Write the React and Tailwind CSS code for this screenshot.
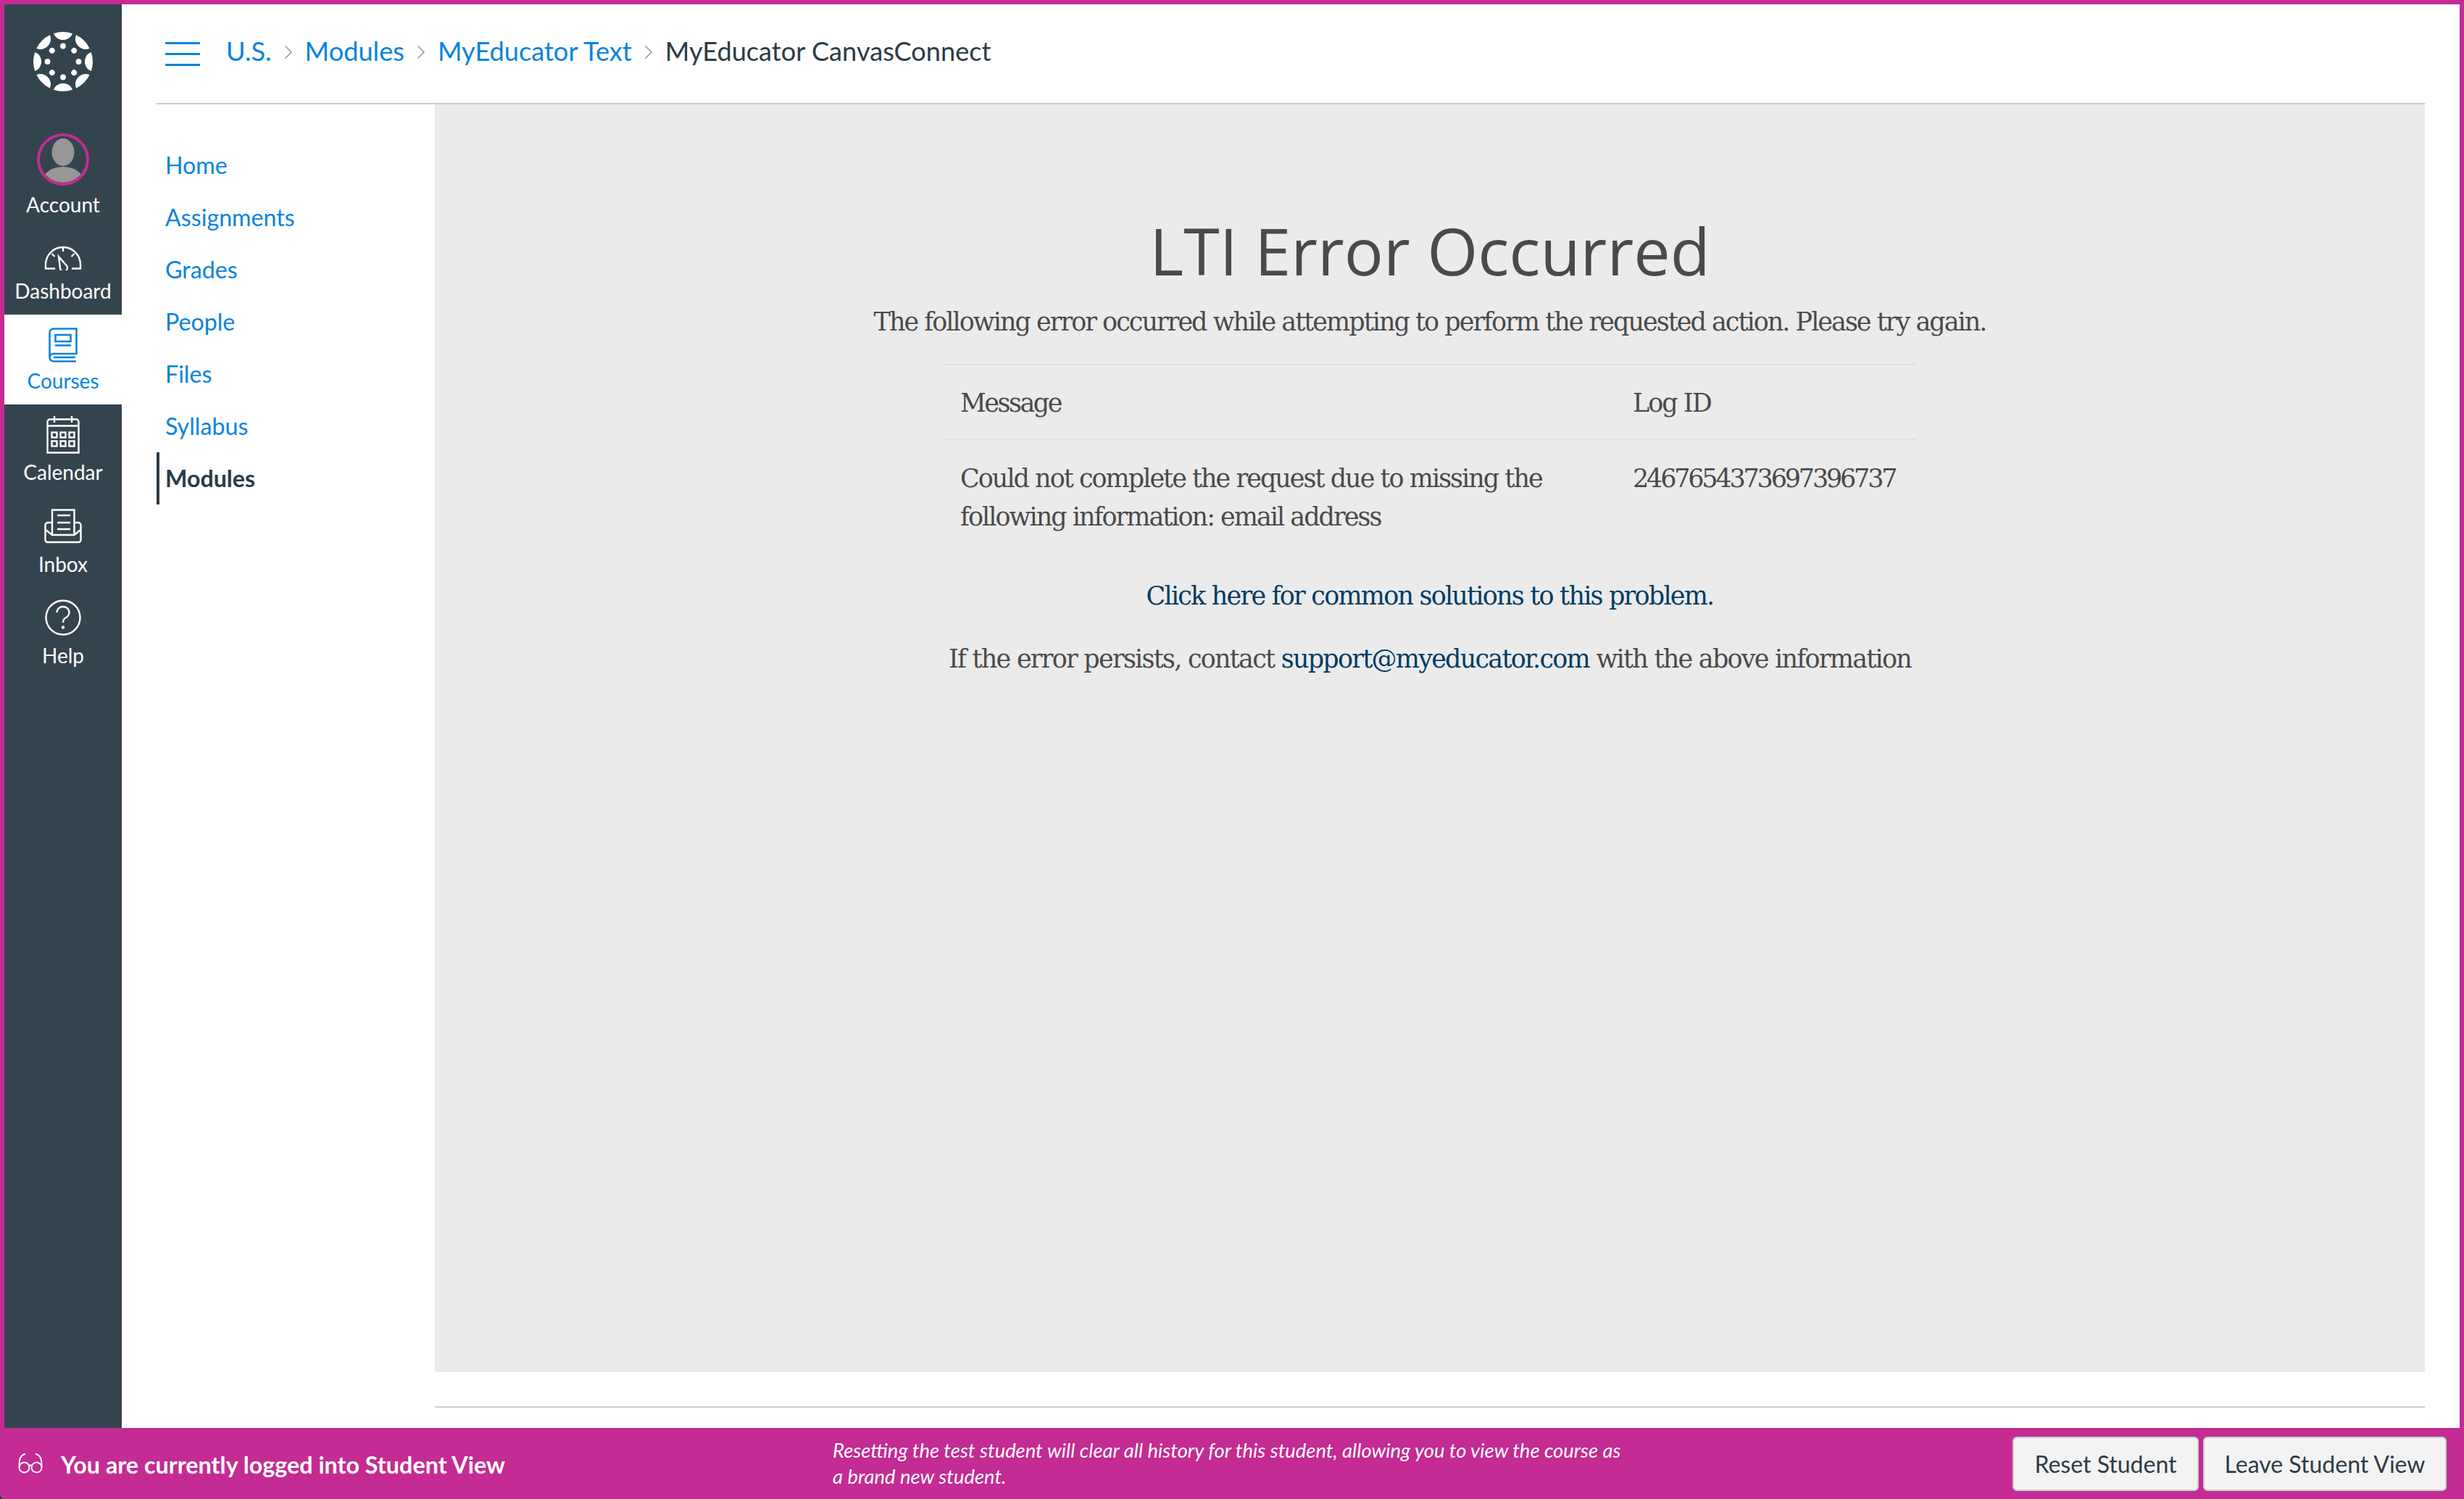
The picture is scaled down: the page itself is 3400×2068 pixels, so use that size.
const navItems = [
  { label: "Home", active: false },
  { label: "Assignments", active: false },
  { label: "Grades", active: false },
  { label: "People", active: false },
  { label: "Files", active: false },
  { label: "Syllabus", active: false },
  { label: "Modules", active: true },
];

function CanvasLogo() {
  const wedge =
    "M-13,-38.8 A41 41 0 0 1 13,-38.8 C11,-33 5.5,-30 0,-30 C-5.5,-30 -11,-33 -13,-38.8Z";
  const angles = [0, 45, 90, 135, 180, 225, 270, 315];
  return (
    <svg width="84" height="84" viewBox="-42 -42 84 84" fill="white">
      {angles.map((a) => (
        <g key={a} transform={`rotate(${a})`}>
          <path d={wedge} />
          <circle cx="0" cy="-21.5" r="3.9" />
        </g>
      ))}
    </svg>
  );
}

function Avatar() {
  return (
    <svg width="72" height="72" viewBox="0 0 72 72">
      <clipPath id="avatar-clip">
        <circle cx="36" cy="36" r="32" />
      </clipPath>
      <g clipPath="url(#avatar-clip)" fill="#979797">
        <ellipse cx="36" cy="26" rx="15.5" ry="19" />
        <ellipse cx="36" cy="66" rx="28" ry="20" />
      </g>
      <circle cx="36" cy="36" r="34" fill="none" stroke="#c42b93" strokeWidth="4" />
    </svg>
  );
}

function DashboardIcon() {
  return (
    <svg width="52" height="34" viewBox="0 0 52 34" fill="none" stroke="white" strokeWidth="2.4">
      <path d="M15,31.5 H2 V26 A24 24 0 0 1 50,26 V31.5 H38" />
      <path d="M26,2 V8 M10.5,11 L14.5,15 M41.5,11 L37.5,15" />
      <path d="M20,15 L30.5,27 A5 5 0 1 1 22,31 Z" />
    </svg>
  );
}

function CoursesIcon() {
  return (
    <svg width="40" height="48" viewBox="0 0 40 48" fill="none" stroke="#0a84db" strokeWidth="2.6">
      <path d="M1.5,41 V7 A5.5 5.5 0 0 1 7,1.5 H38.5 V36 H7 A5.5 5.5 0 0 0 1.5,41 A5.5 5.5 0 0 0 7,46.5 H38" />
      <path d="M37,41 H7" />
      <rect x="9.5" y="10" width="21" height="9" />
      <path d="M9,24.5 H31" />
    </svg>
  );
}

function CalendarIcon() {
  const cols = [11, 23, 35];
  const rows = [26, 38];
  return (
    <svg width="46" height="52" viewBox="0 0 46 52" fill="none" stroke="white" strokeWidth="2.4">
      <path d="M1.5,50.5 V8 A3.5 3.5 0 0 1 5,4.5 H41 A3.5 3.5 0 0 1 44.5,8 V50.5 Z" />
      <path d="M2,13.5 H44 M11,0 V9 M35,0 V9" />
      {rows.map((y) =>
        cols.map((x) => <rect key={`${x}-${y}`} x={x - 3.5} y={y - 3.5} width="7" height="7" />)
      )}
    </svg>
  );
}

function InboxIcon() {
  return (
    <svg width="52" height="48" viewBox="0 0 52 48" fill="none" stroke="white" strokeWidth="2.4">
      <path d="M11,36 V1.5 H41.5 V36" />
      <path d="M18,9 H36 M18,19 H36 M18,28 H36" />
      <path d="M10,19 H5 A3.5 3.5 0 0 0 1.5,22.5 V43 A3 3 0 0 0 4.5,46 H47.5 A3 3 0 0 0 50.5,43 V22.5 A3.5 3.5 0 0 0 47,19 H42" />
      <path d="M2,29 L11,36 H41.5 L50,29" />
    </svg>
  );
}

function HelpIcon() {
  return (
    <svg width="50" height="50" viewBox="0 0 50 50" fill="none" stroke="white" strokeWidth="2.4">
      <circle cx="25" cy="25" r="23.5" />
      <path d="M16.5,18 A8.5 8 0 1 1 29,25 C26,26.5 25,28 25,32" />
      <circle cx="25" cy="38.5" r="2.2" fill="white" stroke="none" />
    </svg>
  );
}

function GlassesIcon() {
  return (
    <svg width="36" height="28" viewBox="0 0 36 28" fill="none" stroke="white" strokeWidth="1.8">
      <circle cx="9.5" cy="19.5" r="7" />
      <circle cx="26.5" cy="19.5" r="7" />
      <path d="M16,17 Q18,15.5 20,17" />
      <path d="M2.5,19.5 C2,10 4,2 11,1" />
      <path d="M33.5,19.5 C34,10 32,2 25,1" />
    </svg>
  );
}

function Chevron() {
  return (
    <svg width="12" height="20" viewBox="0 0 12 20" fill="none" stroke="#8a8a8a" strokeWidth="1.4" className="mx-[17px] mt-[15px]">
      <path d="M1.5,1.5 L10,10 L1.5,18.5" />
    </svg>
  );
}

function SideItem({ icon, label, active, box }) {
  return (
    <a className={`flex flex-col items-center ${box} ${active ? "bg-white text-[#0a84db]" : "text-white"}`}>
      {icon}
      <span className="text-[28px] leading-[50px]">{label}</span>
    </a>
  );
}

function App() {
  return (
    <div className="w-[3400px] h-[2068px] bg-[#1e2a33]">
      <div className="w-full h-full bg-[#c42b93] flex flex-col pt-[6px] font-['Lato',sans-serif] overflow-hidden rounded-bl-[6px]">
        <div className="flex flex-1 mx-[6px] bg-white min-h-0">
          {/* global nav */}
          <div className="w-[162px] bg-[#34444f] flex flex-col">
            <div className="h-[168px] pt-[37px] flex justify-center">
              <CanvasLogo />
            </div>
            <div className="h-[136px] pt-[10px] flex flex-col items-center text-white">
              <Avatar />
              <span className="text-[28px] leading-[52px]">Account</span>
            </div>
            <SideItem icon={<DashboardIcon />} label="Dashboard" box="h-[124px] pt-[29px] gap-[3px]" />
            <SideItem icon={<CoursesIcon />} label="Courses" box="h-[124px] pt-[18px]" active />
            <SideItem icon={<CalendarIcon />} label="Calendar" box="h-[126px] pt-[16px]" />
            <SideItem icon={<InboxIcon />} label="Inbox" box="h-[126px] pt-[18px] gap-[3px]" />
            <SideItem icon={<HelpIcon />} label="Help" box="h-[126px] pt-[17px] gap-[2px]" />
          </div>

          <div className="flex-1 min-w-0 flex flex-col pl-[48px] pr-[48px]">
            {/* breadcrumbs */}
            <div className="h-[138px] shrink-0 border-b-[2px] border-[#c7cdd1] flex items-start pt-[41px] pl-[12px] text-[36.2px] leading-[46px]">
              <div className="w-[48px] h-[33px] mt-[11px] mr-[36px] flex flex-col justify-between">
                <div className="h-[3px] bg-[#0a84db]" />
                <div className="h-[3px] bg-[#0a84db]" />
                <div className="h-[3px] bg-[#0a84db]" />
              </div>
              <a className="text-[#0a84db]">U.S.</a>
              <Chevron />
              <a className="text-[#0a84db]">Modules</a>
              <Chevron />
              <a className="text-[#0a84db]">MyEducator Text</a>
              <Chevron />
              <span className="text-[#2d3b45]">MyEducator CanvasConnect</span>
            </div>

            <div className="flex flex-1 min-h-0">
              {/* course nav */}
              <div className="w-[384px] shrink-0 pt-[48px] flex flex-col">
                {navItems.map((item) => (
                  <a
                    key={item.label}
                    className={`h-[72px] flex items-center pl-[8px] border-l-[4px] text-[32.2px] ${
                      item.active
                        ? "border-[#2d3b45] text-[#2d3b45] font-bold"
                        : "border-transparent text-[#0a84db]"
                    }`}
                  >
                    {item.label}
                  </a>
                ))}
              </div>

              <div className="flex-1 min-w-0 flex flex-col">
                {/* lti frame */}
                <div className="h-[1749px] bg-[#ebebeb] text-[#4a4a4a] flex flex-col items-center pt-[146px] font-['DejaVu_Serif',serif] text-[35px] tracking-[-2px]">
                  <h1 className="font-['Open_Sans',sans-serif] text-[90px] leading-[110px] tracking-normal">
                    LTI Error Occurred
                  </h1>
                  <p className="mt-[17px] leading-[54px]">
                    The following error occurred while attempting to perform the requested action. Please try again.
                  </p>
                  <table className="mt-[31px] w-[1342px] table-fixed leading-[53px]">
                    <thead>
                      <tr className="border-y-[2px] border-[#dee2e6]">
                        <th className="w-[928px] text-left font-normal px-[23px] pt-[26px] pb-[22px] tracking-[-2.5px]">Message</th>
                        <th className="text-left font-normal px-[23px] pt-[26px] pb-[22px]">Log ID</th>
                      </tr>
                    </thead>
                    <tbody>
                      <tr>
                        <td className="align-top px-[23px] pt-[27px]">
                          Could not complete the request due to missing the following information: email address
                        </td>
                        <td className="align-top px-[23px] pt-[27px] tracking-[-3.2px]">2467654373697396737</td>
                      </tr>
                    </tbody>
                  </table>
                  <a className="mt-[55px] leading-[54px] text-[#003b63] tracking-[-1.8px]">Click here for common solutions to this problem.</a>
                  <p className="mt-[33px] leading-[54px] tracking-[-1.77px]">
                    If the error persists, contact <a className="text-[#003b63]">support@myeducator.com</a> with the above information
                  </p>
                </div>
                <div className="mt-[47px] border-t-[2px] border-[#c7cdd1]" />
              </div>
            </div>
          </div>
        </div>

        {/* student view bar */}
        <div className="h-[98px] shrink-0 flex items-center pl-[24px] pr-[24px]">
          <GlassesIcon />
          <span className="ml-[24px] mt-[5px] w-[1065px] text-[32.3px] font-bold text-white">You are currently logged into Student View</span>
          <p className="w-[1100px] text-[27.4px] leading-[36px] italic text-white">
            Resetting the test student will clear all history for this student, allowing you to view the course as a brand new student.
          </p>
          <div className="ml-auto flex gap-[6px]">
            <button className="w-[257px] h-[75px] pt-[2px] bg-[#f3f3f3] border-[2px] border-[#c7cdd1] rounded-[6px] text-[32px] text-[#2d3b45]">Reset Student</button>
            <button className="w-[336px] h-[75px] pt-[2px] bg-[#f3f3f3] border-[2px] border-[#c7cdd1] rounded-[6px] text-[32px] text-[#2d3b45]">Leave Student View</button>
          </div>
        </div>
      </div>
    </div>
  );
}

export default App;
